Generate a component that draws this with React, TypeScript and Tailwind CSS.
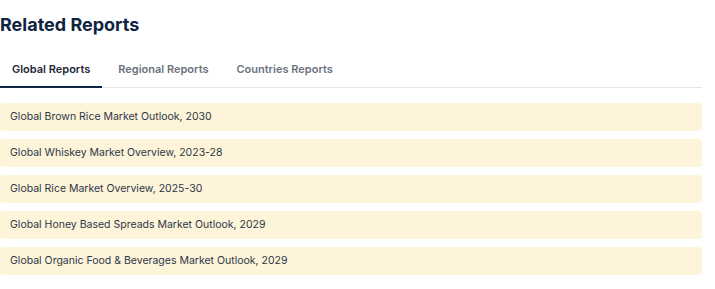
const tabs = ["Global Reports", "Regional Reports", "Countries Reports"];

const reports = [
  "Global Brown Rice Market Outlook, 2030",
  "Global Whiskey Market Overview, 2023-28",
  "Global Rice Market Overview, 2025-30",
  "Global Honey Based Spreads Market Outlook, 2029",
  "Global Organic Food & Beverages Market Outlook, 2029",
];

export default function App() {
  return (
    <div className="w-[715px] h-[289px] bg-white font-['Inter',sans-serif]">
      <div className="w-[702px] pt-[13px]">
        <h2 className="text-[18px] leading-[24px] font-bold text-[#0e2440]">Related Reports</h2>

        <div className="mt-[21px] flex gap-1 border-b border-[#e5e7eb]">
          {tabs.map((tab, i) => (
            <button
              key={tab}
              className={
                i === 0
                  ? "px-3 pb-[10px] pt-[4px] text-[11px] leading-[14px] font-semibold text-[#1f2937] border-b-[2px] border-[#0e2440] -mb-px"
                  : "px-3 pb-[10px] pt-[4px] text-[11px] leading-[14px] font-semibold text-[#6b7280] border-b-[2px] border-transparent -mb-px"
              }
            >
              {tab}
            </button>
          ))}
        </div>

        <div className="mt-[15px] flex flex-col gap-2">
          {reports.map((r) => (
            <div
              key={r}
              className="h-[28px] flex items-center px-[10px] rounded-[4px] bg-[#fdf4d9] text-[10.5px] text-[#2d3748]"
            >
              {r}
            </div>
          ))}
        </div>
      </div>
    </div>
  );
}
